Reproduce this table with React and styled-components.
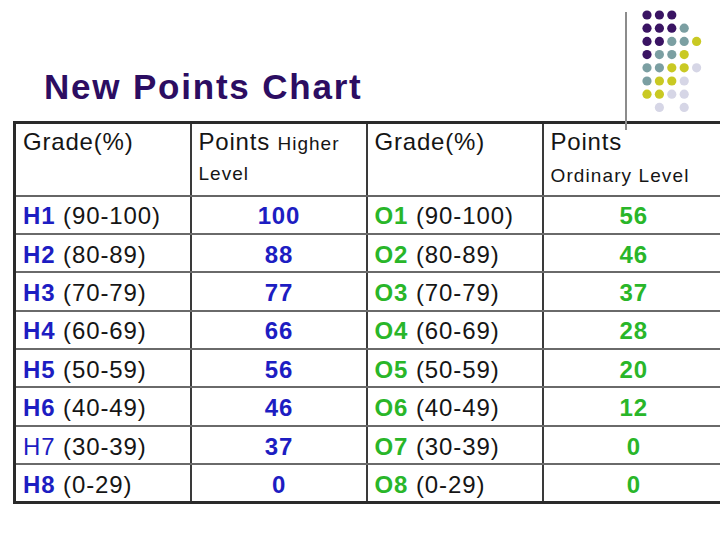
import React from "react";
import styled, { createGlobalStyle } from "styled-components";

const GlobalStyle = createGlobalStyle`
  html, body { margin: 0; padding: 0; background: #ffffff; }
  body { font-family: "Liberation Sans", Arial, sans-serif; }
`;

const Slide = styled.div`
  position: relative;
  width: 720px;
  height: 539px;
  overflow: hidden;
  background: #ffffff;
`;

const TitleBar = styled.header`
  display: flex;
  align-items: flex-end;
  height: 121px;
  box-sizing: border-box;
  padding: 0 0 14px 44px;
`;

const Title = styled.h1`
  margin: 0;
  font-family: "Liberation Sans", Arial, sans-serif;
  font-weight: 700;
  font-size: 35px;
  line-height: 40px;
  letter-spacing: 1.8px;
  color: #2c0d62;
`;

const Rule = styled.div`
  position: absolute;
  left: 625px;
  top: 12px;
  width: 2px;
  height: 118px;
  background: #8c8c8c;
  z-index: 2;
`;

const Dots = styled.svg`
  position: absolute;
  left: 640px;
  top: 8px;
  z-index: 2;
`;

const Table = styled.table`
  margin-left: 13px;
  width: 710px;
  border-collapse: collapse;
  table-layout: fixed;
  border: 3px solid #2a2a2a;
  font-family: "Liberation Sans", Arial, sans-serif;
  color: #151515;
`;

const HeadCell = styled.th`
  height: 73px;
  box-sizing: border-box;
  padding: 4px 6px 0 7px;
  vertical-align: top;
  text-align: left;
  font-weight: 400;
  font-size: 24px;
  line-height: 28px;
  letter-spacing: 0.8px;
  border-right: 2px solid #3a3a3a;
  border-bottom: 2px solid #666;
`;

const Small = styled.span`
  font-size: 19px;
  letter-spacing: 1px;
`;

const SmallLine = styled.div`
  font-size: 19px;
  letter-spacing: 1.1px;
  margin-top: 6px;
`;

const Cell = styled.td`
  height: 38.4px;
  box-sizing: border-box;
  padding: 3px 6px 0 7px;
  font-size: 24px;
  line-height: 30px;
  letter-spacing: 0.9px;
  text-align: ${(p) => (p.$center ? "center" : "left")};
  border-right: 2px solid #3a3a3a;
  border-bottom: 2px solid #6a6a6a;
  white-space: nowrap;
`;

const Code = styled.span`
  font-weight: ${(p) => (p.$bold ? 700 : 400)};
  color: ${(p) => p.$color};
`;

const Score = styled.span`
  font-weight: 700;
  color: ${(p) => p.$color};
`;

const BLUE = "#1d1dc2";
const GREEN = "#29b629";

const rows = [
  ["H1", "(90-100)", "100", "O1", "(90-100)", "56"],
  ["H2", "(80-89)", "88", "O2", "(80-89)", "46"],
  ["H3", "(70-79)", "77", "O3", "(70-79)", "37"],
  ["H4", "(60-69)", "66", "O4", "(60-69)", "28"],
  ["H5", "(50-59)", "56", "O5", "(50-59)", "20"],
  ["H6", "(40-49)", "46", "O6", "(40-49)", "12"],
  ["H7", "(30-39)", "37", "O7", "(30-39)", "0"],
  ["H8", "(0-29)", "0", "O8", "(0-29)", "0"],
];

const P = "#3a1463";
const T = "#7b9fa2";
const Y = "#c9c923";
const L = "#d6d6e6";
const dotGrid = [
  [P, P, P, null, null],
  [P, P, P, T, null],
  [P, P, T, T, Y],
  [P, T, T, Y, null],
  [T, T, Y, Y, L],
  [T, Y, Y, L, null],
  [Y, Y, L, L, null],
  [null, L, null, L, null],
];

function DotCluster() {
  return (
    <Dots width="70" height="110" viewBox="0 0 70 110">
      {dotGrid.map((row, r) =>
        row.map((c, i) =>
          c ? (
            <circle key={`${r}-${i}`} cx={7 + i * 12.4} cy={7 + r * 13.2} r="4.6" fill={c} />
          ) : null
        )
      )}
    </Dots>
  );
}

export default function App() {
  return (
    <>
      <GlobalStyle />
      <Slide>
        <TitleBar>
          <Title>New Points Chart</Title>
        </TitleBar>
        <Rule />
        <DotCluster />
        <Table>
          <colgroup>
            <col style={{ width: "176px" }} />
            <col style={{ width: "176px" }} />
            <col style={{ width: "176px" }} />
            <col style={{ width: "182px" }} />
          </colgroup>
          <thead>
            <tr>
              <HeadCell>Grade(%)</HeadCell>
              <HeadCell>
                Points <Small>Higher</Small>
                <br />
                <Small>Level</Small>
              </HeadCell>
              <HeadCell>Grade(%)</HeadCell>
              <HeadCell>
                Points
                <SmallLine>Ordinary Level</SmallLine>
              </HeadCell>
            </tr>
          </thead>
          <tbody>
            {rows.map(([h, hr, hp, o, or, op]) => (
              <tr key={h}>
                <Cell>
                  <Code $bold={h !== "H7"} $color={BLUE}>{h}</Code> {hr}
                </Cell>
                <Cell $center>
                  <Score $color={BLUE}>{hp}</Score>
                </Cell>
                <Cell>
                  <Code $bold $color={GREEN}>{o}</Code> {or}
                </Cell>
                <Cell $center>
                  <Score $color={GREEN}>{op}</Score>
                </Cell>
              </tr>
            ))}
          </tbody>
        </Table>
      </Slide>
    </>
  );
}
